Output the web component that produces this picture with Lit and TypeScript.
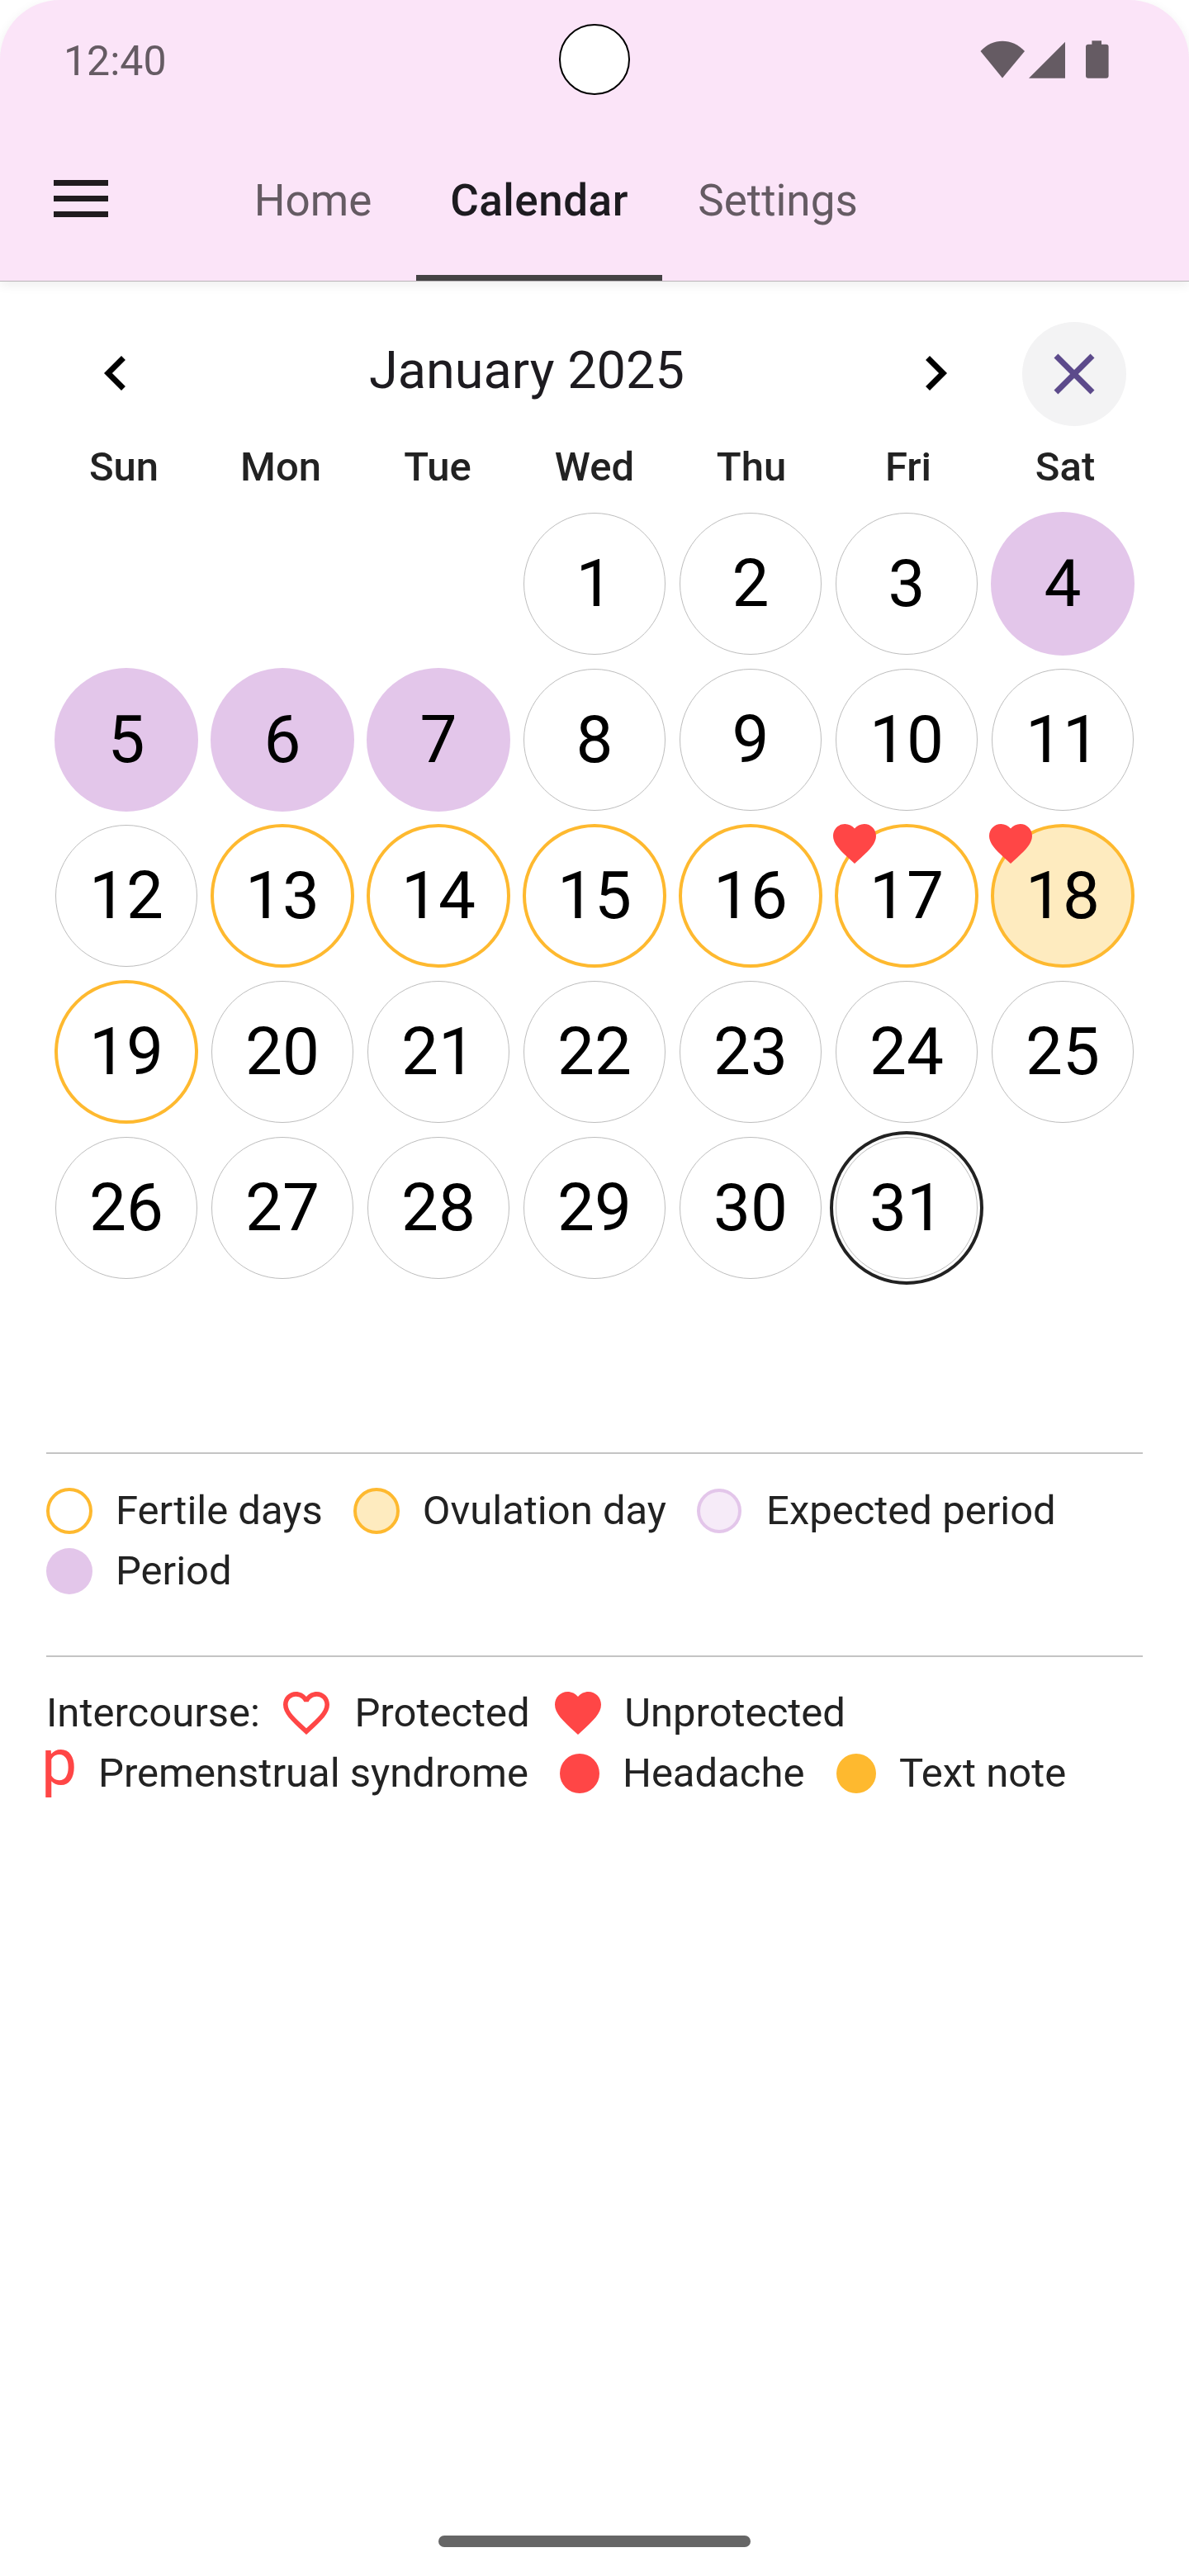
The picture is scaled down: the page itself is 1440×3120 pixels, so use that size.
import {LitElement, html, css, svg} from 'lit';
import {customElement} from 'lit/decorators.js';
import {classMap} from 'lit/directives/class-map.js';

const HEART = 'M12 21.35l-1.45-1.32C5.4 15.36 2 12.28 2 8.5 2 5.42 4.42 3 7.5 3c1.74 0 3.41.81 4.5 2.09C13.09 3.81 14.76 3 16.5 3 19.58 3 22 5.42 22 8.5c0 3.78-3.4 6.86-8.55 11.54L12 21.35z';
const HEART_BORDER = 'M16.5 3c-1.74 0-3.41.81-4.5 2.09C10.91 3.81 9.24 3 7.5 3 4.42 3 2 5.42 2 8.5c0 3.78 3.4 6.86 8.55 11.54L12 21.35l1.45-1.32C18.6 15.36 22 12.28 22 8.5 22 5.42 19.58 3 16.5 3zm-4.4 15.55l-.1.1-.1-.1C7.14 14.24 4 11.39 4 8.5 4 6.5 5.5 5 7.5 5c1.54 0 3.04.99 3.57 2.36h1.87C13.46 5.99 14.96 5 16.5 5c2 0 3.5 1.5 3.5 3.5 0 2.89-3.14 5.74-7.9 10.05z';

const heart = (cls: string, d = HEART) => html`<svg class=${cls} viewBox="2 3 20 18.35" preserveAspectRatio="none">${svg`<path d=${d}></path>`}</svg>`;

const DAYS = ['Sun', 'Mon', 'Tue', 'Wed', 'Thu', 'Fri', 'Sat'];
const PERIOD = [4, 5, 6, 7];
const FERTILE = [13, 14, 15, 16, 17, 18, 19];

@customElement('app-root')
export class AppRoot extends LitElement {
	static styles = css`
		:host {
			display: flex;
			flex-direction: column;
			width: 1440px;
			height: 3120px;
			background: #fff;
			font-family: Roboto, sans-serif;
			overflow: hidden;
			color: #1d1b20;
		}

		.top {
			background: #fbe4f8;
			border-radius: 72px 72px 0 0;
			height: 341px;
			flex: none;
			box-sizing: border-box;
			border-bottom: 1px solid #b9b4b8;
			box-shadow: 0 4px 14px rgb(0 0 0 / 7%);
			position: relative;
			display: flex;
			flex-direction: column;
		}

		.status {
			height: 144px;
			display: flex;
			align-items: center;
			padding: 0 97px 0 77px;
			justify-content: space-between;
			position: relative;
			box-sizing: border-box;
		}

		.time {
			font-size: 50px;
			color: #655b63;
			margin-top: 4px;
		}

		.camera {
			position: absolute;
			left: 677px;
			top: 29px;
			width: 85.5px;
			height: 85.5px;
			border-radius: 50%;
			background: #fff;
			border: 2px solid #000;
			box-sizing: border-box;
		}

		.sys {
			display: block;
			width: 156px;
			height: 46px;
			fill: #655b63;
		}

		.tabs {
			display: flex;
			height: 196px;
		}

		.menu {
			width: 66px;
			height: 45px;
			margin: 74px 0 0 65px;
			flex: none;
			fill: #201c1f;
		}

		.tab-list {
			display: flex;
			margin-left: 123px;
		}

		.tab {
			font-size: 53px;
			line-height: 60px;
			color: #655b63;
			text-align: center;
			padding-top: 69px;
			box-sizing: border-box;
			position: relative;
		}

		.tab.active {
			color: #1d1b20;
			font-weight: 500;
			letter-spacing: 0.5px;
		}

		.tab.active::after {
			content: '';
			position: absolute;
			left: 0;
			right: 0;
			bottom: 0;
			height: 7px;
			background: #444244;
		}

		.t-home { width: 250px; }
		.t-cal { width: 298px; }
		.t-set { width: 280px; }

		.cal-head {
			height: 126px;
			margin: 49px 0 20px;
			display: flex;
			align-items: center;
		}

		.month {
			font-size: 63px;
			line-height: 80px;
			color: #1d1b20;
			width: 380px;
			margin: -9px 0 0 265px;
			white-space: nowrap;
		}

		.chev {
			width: 84px;
			height: 84px;
			margin-top: -2px;
			fill: #000;
		}

		.chev.prev { margin-left: 98px; }
		.chev.next { margin-left: 264px; }

		.close {
			margin-left: 63px;
			width: 126px;
			height: 126px;
			border-radius: 50%;
			background: #f3f3f4;
			display: flex;
			align-items: center;
			justify-content: center;
		}

		.close svg {
			width: 84px;
			height: 84px;
			fill: #5c4a8b;
		}

		.dows {
			display: grid;
			grid-template-columns: repeat(7, 190px);
			padding-left: 55px;
			height: 76px;
		}

		.dow {
			font-size: 49px;
			font-weight: 500;
			text-align: center;
			line-height: 60px;
			color: #222;
		}

		.grid {
			display: grid;
			grid-template-columns: repeat(7, 189px);
			grid-auto-rows: 189px;
			padding-left: 58.5px;
		}

		.cell {
			display: flex;
			align-items: center;
			justify-content: center;
		}

		.day {
			width: 172px;
			height: 172px;
			border-radius: 50%;
			border: 1px solid #bdbdbd;
			box-sizing: border-box;
			display: flex;
			align-items: center;
			justify-content: center;
			font-size: 80px;
			color: #000;
			background: #fff;
			position: relative;
			flex: none;
		}

		.day.period {
			background: #e3c6ea;
			border: none;
			width: 174px;
			height: 174px;
		}

		.day.fertile {
			border: 4px solid #feb92f;
			width: 174px;
			height: 174px;
		}

		.day.ovulation {
			background: #feebbf;
		}

		.day.today {
			outline: 4px solid #222;
			outline-offset: 3px;
		}

		.day-heart {
			position: absolute;
			left: -6px;
			top: -4px;
			width: 52px;
			height: 48px;
			fill: #ff4646;
		}

		.legend {
			margin: 0 56px;
			border-top: 2px solid #c4c4c4;
			font-size: 49px;
			line-height: 56px;
			color: #222;
			box-sizing: border-box;
			flex: none;
		}

		.legend-a {
			margin-top: 202px;
			height: 246px;
			padding-top: 41px;
		}

		.legend-b {
			padding-top: 40px;
		}

		.row {
			display: flex;
			align-items: center;
			height: 56px;
			margin-bottom: 17px;
			white-space: nowrap;
		}

		.row > * { flex: none; }

		.swatch {
			width: 56px;
			height: 56px;
			border-radius: 50%;
			box-sizing: border-box;
			margin-right: 28px;
		}

		.swatch.s-fertile { border: 4px solid #feb92f; background: #fff; }
		.swatch.s-ovulation { border: 4px solid #feb92f; background: #feebbf; margin-left: 37px; }
		.swatch.s-expected { border: 4px solid #e3c6ea; background: #f6ebf8; margin-left: 37px; margin-right: 30px; width: 54px; height: 54px; }
		.swatch.s-period { background: #e3c6ea; }

		.h-icon {
			width: 56px;
			height: 52px;
			fill: #ff4646;
		}

		.h-outline {
			margin-left: 28.5px;
			margin-right: 30px;
		}

		.h-solid {
			margin-left: 30px;
			margin-right: 28.5px;
		}

		.pms {
			color: #ff4646;
			font-size: 77px;
			width: 43px;
			margin: -26px 26px 0 -6px;
		}

		.dot {
			width: 48.5px;
			height: 48.5px;
			border-radius: 50%;
			margin: 0 27.5px 0 38px;
		}

		.dot.red { background: #ff4646; }
		.dot.amber { background: #feb92f; margin-left: 38.5px; }

		.home-bar {
			margin: auto 0 35px 531px;
			width: 378px;
			height: 14px;
			border-radius: 7px;
			background: #666;
			flex: none;
		}
	`;

	private renderDay(d: number) {
		const cls = {
			day: true,
			period: PERIOD.includes(d),
			fertile: FERTILE.includes(d),
			ovulation: d === 18,
			today: d === 31,
		};
		return html`<div class="cell">
			<div class=${classMap(cls)}>
				${d}
				${d === 17 || d === 18 ? heart('day-heart') : null}
			</div>
		</div>`;
	}

	render() {
		const days = Array.from({length: 31}, (_, i) => i + 1);
		return html`
			<div class="top">
				<div class="status">
					<span class="time">12:40</span>
					<div class="camera"></div>
					<svg class="sys" viewBox="1187 49 156 46">
						<path d="M1187.5 62 C1202 45.5 1226 45.5 1241 62 L1214 94.5 Z"></path>
						<path d="M1246 94.7 L1290 50.7 V94.7 Z"></path>
						<rect x="1322.4" y="49.3" width="11.6" height="6"></rect>
						<rect x="1315" y="53.7" width="27.6" height="41" rx="3"></rect>
					</svg>
				</div>
				<div class="tabs">
					<svg class="menu" viewBox="0 0 66 45">
						<rect width="66" height="7" y="0"></rect>
						<rect width="66" height="7" y="19"></rect>
						<rect width="66" height="7" y="38"></rect>
					</svg>
					<div class="tab-list">
						<div class="tab t-home">Home</div>
						<div class="tab t-cal active">Calendar</div>
						<div class="tab t-set">Settings</div>
					</div>
				</div>
			</div>
			<div class="cal-head">
				<svg class="chev prev" viewBox="0 0 24 24"><path d="M15.41 7.41L14 6l-6 6 6 6 1.41-1.41L10.83 12z"></path></svg>
				<div class="month">January 2025</div>
				<svg class="chev next" viewBox="0 0 24 24"><path d="M10 6L8.59 7.41 13.17 12l-4.58 4.58L10 18l6-6z"></path></svg>
				<div class="close">
					<svg viewBox="0 0 24 24"><path d="M19 6.41L17.59 5 12 10.59 6.41 5 5 6.41 10.59 12 5 17.59 6.41 19 12 13.41 17.59 19 19 17.59 13.41 12z"></path></svg>
				</div>
			</div>
			<div class="dows">
				${DAYS.map(d => html`<div class="dow">${d}</div>`)}
			</div>
			<div class="grid">
				<div class="cell"></div><div class="cell"></div><div class="cell"></div>
				${days.map(d => this.renderDay(d))}
			</div>
			<div class="legend legend-a">
				<div class="row">
					<div class="swatch s-fertile"></div><span>Fertile days</span>
					<div class="swatch s-ovulation"></div><span>Ovulation day</span>
					<div class="swatch s-expected"></div><span>Expected period</span>
				</div>
				<div class="row">
					<div class="swatch s-period"></div><span>Period</span>
				</div>
			</div>
			<div class="legend legend-b">
				<div class="row">
					<span>Intercourse:</span>
					${heart('h-icon h-outline', HEART_BORDER)}
					<span>Protected</span>
					${heart('h-icon h-solid')}
					<span>Unprotected</span>
				</div>
				<div class="row">
					<span class="pms">p</span>
					<span>Premenstrual syndrome</span>
					<div class="dot red"></div>
					<span>Headache</span>
					<div class="dot amber"></div>
					<span>Text note</span>
				</div>
			</div>
			<div class="home-bar"></div>
		`;
	}
}
